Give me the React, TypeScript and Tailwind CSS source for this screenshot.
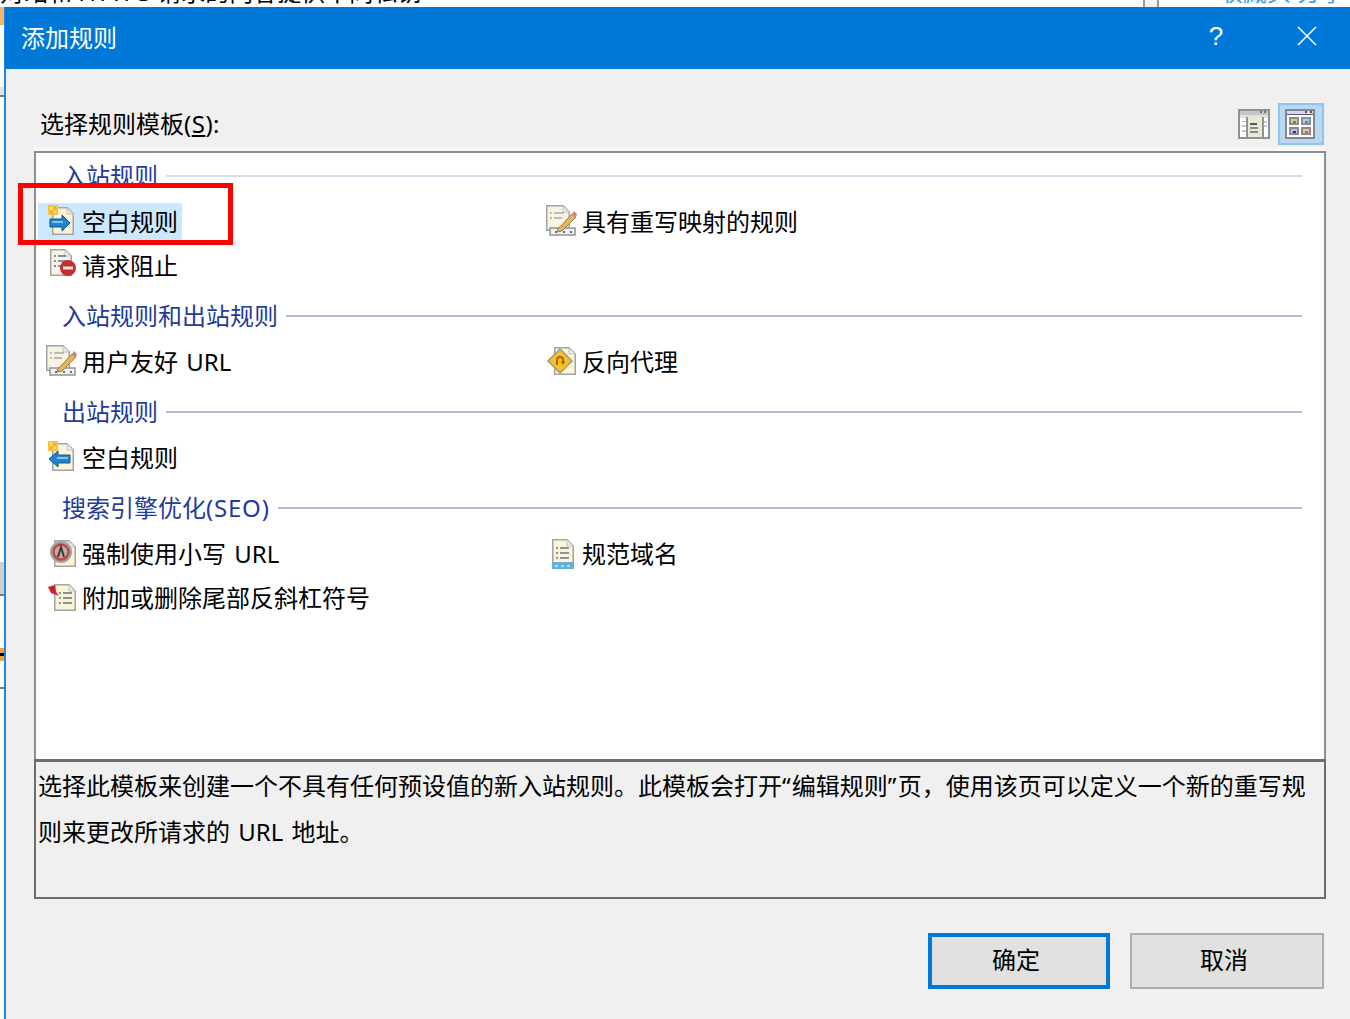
import React from 'react';

const Page = ({ x, y, w, h, fill = '#fbf4d6' }: { x: number; y: number; w: number; h: number; fill?: string }) => (
  <g>
    <path
      d={`M${x + 0.75} ${y + 0.75}H${x + w - 7}L${x + w - 0.75} ${y + 7}V${y + h - 0.75}H${x + 0.75}Z`}
      fill={fill}
      stroke="#a3a3a3"
      strokeWidth="1.5"
    />
    <path d={`M${x + w - 7} ${y + 1}V${y + 7}H${x + w - 1}Z`} fill="#ececec" stroke="#c4c4c4" />
  </g>
);

const Star = () => (
  <g shapeRendering="crispEdges">
    <rect x="2" y="-1" width="10" height="10" fill="#f7c33c" />
    <rect x="4" y="1" width="2" height="2" fill="#fde79a" />
    <rect x="8" y="5" width="2" height="2" fill="#fde79a" />
    <rect x="8" y="1" width="2" height="2" fill="#e6a61f" />
    <rect x="4" y="5" width="2" height="2" fill="#e6a61f" />
  </g>
);

const BlankIn = () => (
  <>
    <Page x={6} y={1} w={22} h={28} />
    <Star />
    <path d="M4 13H16V9L24 17L16 25V21H4Z" fill="#1f84cc" stroke="#14598f" strokeWidth="1" />
    <rect x="6" y="15" width="11" height="2" fill="#7cc4ee" />
  </>
);

const BlankOut = () => (
  <>
    <Page x={6} y={1} w={22} h={28} />
    <Star />
    <path d="M24 13H12V9L3 17L12 25V21H24Z" fill="#1f84cc" stroke="#14598f" strokeWidth="1" />
    <rect x="11" y="15" width="11" height="2" fill="#7cc4ee" />
  </>
);

const Block = () => (
  <>
    <Page x={4} y={-1} w={22} h={27} fill="#f8f5e6" />
    <path d="M8 6h2M12 6h8M8 11h2M12 11h8M8 16h2M12 16h4" stroke="#6b6b80" strokeWidth="1.5" />
    <circle cx="22" cy="18" r="8" fill="#c22f2f" />
    <rect x="17" y="16.5" width="10" height="3" fill="#f3dede" />
  </>
);

const Rewrite = () => (
  <>
    <Page x={0} y={-1} w={24} h={26} fill="#f8f4e2" />
    <path d="M4 7h2M8 7h10M4 12h2M8 12h8" stroke="#a8a8a8" strokeWidth="1.5" />
    <rect x="4" y="22" width="25" height="7" fill="#f0f0f0" stroke="#8f949a" strokeWidth="1.5" />
    <path d="M9 26h2M17 26h2M24 26h2" stroke="#444" strokeWidth="1.5" />
    <path d="M12 23L26 8L30 11L16 25L11 26Z" fill="#e8b45a" stroke="#9a7a4a" strokeWidth="1" />
    <path d="M26 8L28 5L31 8L30 11Z" fill="#d98080" />
  </>
);

const Proxy = () => (
  <>
    <Page x={8} y={1} w={22} h={28} />
    <path d="M14 3L26 15L14 27L2 15Z" fill="#f5c21f" stroke="#9a9a8a" strokeWidth="1.5" />
    <path d="M11 19V13.5C11 10 17 10 17 13.5V16" fill="none" stroke="#a8660f" strokeWidth="2" />
    <path d="M14.5 15.5H19.5L17 19Z" fill="#a8660f" />
  </>
);

const Lower = () => (
  <>
    <Page x={8} y={2} w={22} h={27} />
    <circle cx="15" cy="14" r="11" fill="#a3a3a3" />
    <circle cx="15" cy="14" r="7.5" fill="#c9a9a6" stroke="#bd4a4a" strokeWidth="2.5" />
    <path d="M12 19L15 9L18 19" fill="none" stroke="#3c3c3c" strokeWidth="2" />
  </>
);

const Canonical = () => (
  <>
    <Page x={6} y={1} w={22} h={30} />
    <path d="M10 10h2M14 10h9M10 15h2M14 15h9M10 20h2M14 20h9" stroke="#6f6f88" strokeWidth="1.5" />
    <rect x="6" y="24" width="22" height="7" fill="#62b2dc" />
    <path d="M9 27h3v2h-3zM15 27h3v2h-3zM21 27h3v2h-3z" fill="#b5def2" />
  </>
);

const Slash = () => (
  <>
    <Page x={8} y={2} w={22} h={27} />
    <path d="M13 11h2M17 11h9M13 16h2M17 16h9M13 21h2M17 21h9" stroke="#6e6a90" strokeWidth="1.5" />
    <path d="M2 5L9 3L10 10L13 14L8 12L5 11Z" fill="#d01f2e" />
  </>
);

const RuleIcon = ({ children }: { children: React.ReactNode }) => (
  <svg viewBox="0 0 32 32" className="w-8 h-8 shrink-0 overflow-visible">
    {children}
  </svg>
);

const Item = ({ icon, label, selected }: { icon: React.ReactNode; label: string; selected?: boolean }) => (
  <div className={`inline-flex justify-self-start items-center gap-1 h-[38px] ml-[2px] pl-2 pr-1 ${selected ? 'bg-[#cce8ff]' : ''}`}>
    <RuleIcon>{icon}</RuleIcon>
    <span className="whitespace-nowrap [word-spacing:2px]">{label}</span>
  </div>
);

const Row = ({ children }: { children: React.ReactNode }) => (
  <div className="grid grid-cols-[500px_1fr] items-center h-11">{children}</div>
);

const Group = ({ title, suffix, first }: { title: string; suffix?: string; first?: boolean }) => (
  <div className={`flex items-center gap-2 h-11 pl-[26px] pr-[22px] ${first ? 'mt-px mb-[2px]' : 'mt-[6px] mb-[2px]'}`}>
    <span className="text-[#1f3c9c] whitespace-nowrap">
      {title}
      {suffix && <span className="tracking-[0.8px]">{suffix}</span>}
    </span>
    <div className={`flex-1 h-[2px] ${first ? 'bg-[#d6deeb]' : 'bg-[#b3bedd]'}`} />
  </div>
);

const DetailsView = () => (
  <svg viewBox="0 0 32 30" className="w-8 h-[30px]" shapeRendering="crispEdges">
    <rect width="32" height="30" fill="#8f9195" />
    <rect x="2" y="2" width="28" height="4" fill="#c4c6c8" />
    <rect x="22" y="2" width="2" height="2" fill="#6f7175" />
    <rect x="26" y="2" width="2" height="2" fill="#6f7175" />
    <rect x="2" y="6" width="28" height="22" fill="#fff" />
    <rect x="2" y="6" width="28" height="3" fill="#e4e2cf" />
    <rect x="10" y="8" width="14" height="20" fill="#e9e7d6" />
    <rect x="8" y="8" width="2" height="20" fill="#8f9195" />
    <rect x="24" y="8" width="2" height="20" fill="#8f9195" />
    <rect x="12" y="14" width="7" height="2" fill="#55555a" />
    <rect x="12" y="18" width="8" height="2" fill="#8a8a80" />
    <rect x="12" y="22" width="8" height="2" fill="#8a8a80" />
    <rect x="4" y="12" width="4" height="1" fill="#b5b5b5" />
    <rect x="4" y="16" width="4" height="2" fill="#c5c5c5" />
    <rect x="4" y="21" width="4" height="2" fill="#c5c5c5" />
    <rect x="26" y="12" width="3" height="2" fill="#b8cdea" />
    <rect x="26" y="16" width="3" height="2" fill="#b8cdea" />
  </svg>
);

const TilesView = () => (
  <svg viewBox="0 0 30 30" className="w-[30px] h-[30px]" shapeRendering="crispEdges">
    <rect width="30" height="30" fill="#85878c" />
    <rect x="2" y="2" width="26" height="3" fill="#d6d8dc" />
    <rect x="20" y="2" width="2" height="2" fill="#55575c" />
    <rect x="25" y="2" width="2" height="2" fill="#55575c" />
    <rect x="2" y="5" width="26" height="23" fill="#fff" />
    <rect x="2" y="5" width="26" height="1" fill="#55577a" />
    <rect x="4" y="8" width="10" height="8" fill="#8b8d90" />
    <rect x="16" y="8" width="10" height="8" fill="#8b8d90" />
    <rect x="4" y="18" width="10" height="8" fill="#8b8d90" />
    <rect x="16" y="18" width="10" height="8" fill="#8b8d90" />
    <rect x="6" y="10" width="6" height="4" fill="#d5cf8a" />
    <rect x="8" y="12" width="3" height="2" fill="#a86a20" />
    <rect x="18" y="10" width="6" height="4" fill="#a8d4ec" />
    <rect x="20" y="12" width="3" height="2" fill="#3a8fc8" />
    <rect x="6" y="20" width="6" height="4" fill="#c4b8e8" />
    <rect x="8" y="22" width="3" height="2" fill="#2a2ac0" />
    <rect x="18" y="20" width="6" height="4" fill="#f0c0a8" />
    <rect x="20" y="22" width="3" height="2" fill="#e0602a" />
  </svg>
);

export default function App() {
  return (
    <div className="w-[1350px] h-[1019px] overflow-hidden bg-white text-[24px] leading-none text-black font-['Noto_Sans','Noto_Sans_CJK_SC',sans-serif]">
      {/* page behind the dialog, only its edges show */}
      <div className="flex h-[7px] overflow-hidden">
        <span className="-mt-[20px] leading-6 whitespace-nowrap">对站和 HTTPS 请求的内容提供不同私钥</span>
        <div className="ml-auto mr-[60px] w-4 h-[7px] border-x-2 border-[#9a9a9a] bg-[#f4f4f4]" />
        <span className="-mt-[20px] mr-[5px] leading-6 whitespace-nowrap text-[#4a9be0]">收藏头 分享</span>
      </div>

      <div className="flex h-[1012px]">
        <div className="w-1 shrink-0 flex flex-col">
          <div className="h-[18px] bg-[#f4b56a]" />
          <div className="h-[62px]" />
          <div className="h-2 bg-[#e2e2e2]" />
          <div className="h-[2px] bg-[#7a7a7a]" />
          <div className="h-[465px]" />
          <div className="h-8 bg-[#cfcfcf]" />
          <div className="h-[2px] bg-[#7a7a7a]" />
          <div className="h-[52px]" />
          <div className="h-[5px] bg-[#f0a040]" />
          <div className="h-[3px] bg-black" />
          <div className="h-[5px] bg-[#f0a040]" />
          <div className="h-[26px]" />
          <div className="h-[2px] bg-[#7a7a7a]" />
        </div>

        <div className="flex-1 min-w-0 flex flex-col border-l-2 border-[#1e88e0] relative">
          {/* title bar */}
          <div className="h-[62px] -ml-px bg-[#0078d7] text-white flex items-center pl-4 shrink-0">
            <span>添加规则</span>
            <span className="ml-auto w-[46px] text-center text-[26px] leading-none font-['Liberation_Sans',sans-serif] -mt-1">?</span>
            <div className="w-[46px] ml-[45px] mr-5 flex justify-center -mt-1">
              <svg viewBox="0 0 20 20" className="w-5 h-5" fill="none" stroke="#fff" strokeWidth="1.5">
                <path d="M1 1L19 19M19 1L1 19" />
              </svg>
            </div>
          </div>

          <div className="flex-1 bg-[#f0f0f0] pl-7 pr-6">
            <div className="h-[78px] flex items-end justify-between pb-[2px]">
              <div className="h-[42px] flex items-center pl-[6px]">
                <span>
                  选择规则模板<span className="tracking-[0.5px]">(<span className="underline">S</span>):</span>
                </span>
              </div>
              <div className="flex items-center gap-2 mr-[2px]">
                <DetailsView />
                <div className="w-[46px] h-[42px] bg-[#b9d8f3] border-2 border-[#8fc3f2] flex items-center justify-center pr-[2px]">
                  <TilesView />
                </div>
              </div>
            </div>
            <div className="h-1 bg-[#f7f7f7]" />

            {/* template list */}
            <div className="h-[608px] bg-white border-2 border-b-0 border-[#8b8e93] overflow-hidden">
              <Group title="入站规则" first />
              <Row>
                <Item selected icon={<BlankIn />} label="空白规则" />
                <Item icon={<Rewrite />} label="具有重写映射的规则" />
              </Row>
              <Row>
                <Item icon={<Block />} label="请求阻止" />
              </Row>
              <Group title="入站规则和出站规则" />
              <Row>
                <Item icon={<Rewrite />} label="用户友好 URL" />
                <Item icon={<Proxy />} label="反向代理" />
              </Row>
              <Group title="出站规则" />
              <Row>
                <Item icon={<BlankOut />} label="空白规则" />
              </Row>
              <Group title="搜索引擎优化" suffix="(SEO)" />
              <Row>
                <Item icon={<Lower />} label="强制使用小写 URL" />
                <Item icon={<Canonical />} label="规范域名" />
              </Row>
              <Row>
                <Item icon={<Slash />} label="附加或删除尾部反斜杠符号" />
              </Row>
            </div>

            {/* description */}
            <div className="h-[140px] border-2 border-t-[3px] border-[#6d6d6d] pt-px pl-[2px] leading-[46px] whitespace-nowrap">
              选择此模板来创建一个不具有任何预设值的新入站规则。此模板会打开<span className="tracking-[1.2px]">“</span>编辑规则<span className="tracking-[1.2px]">”</span>页，使用该页可以定义一个新的重写规
              <br />
              <span className="[word-spacing:2px]">则来更改所请求的 URL 地址。</span>
            </div>

            <div className="flex justify-end gap-5 mt-[34px] mr-[2px]">
              <button className="w-[182px] h-14 bg-[#e1e1e1] border-4 border-[#0078d7] pr-[6px] pb-[2px]">确定</button>
              <button className="w-[194px] h-14 bg-[#e1e1e1] border-2 border-[#adadad] pr-[6px] pb-[2px]">取消</button>
            </div>
          </div>

          {/* red annotation box */}
          <div className="absolute left-3 top-[176px] w-[215px] h-[62px] border-[5px] border-[#ff0000]" />
        </div>
      </div>
    </div>
  );
}
